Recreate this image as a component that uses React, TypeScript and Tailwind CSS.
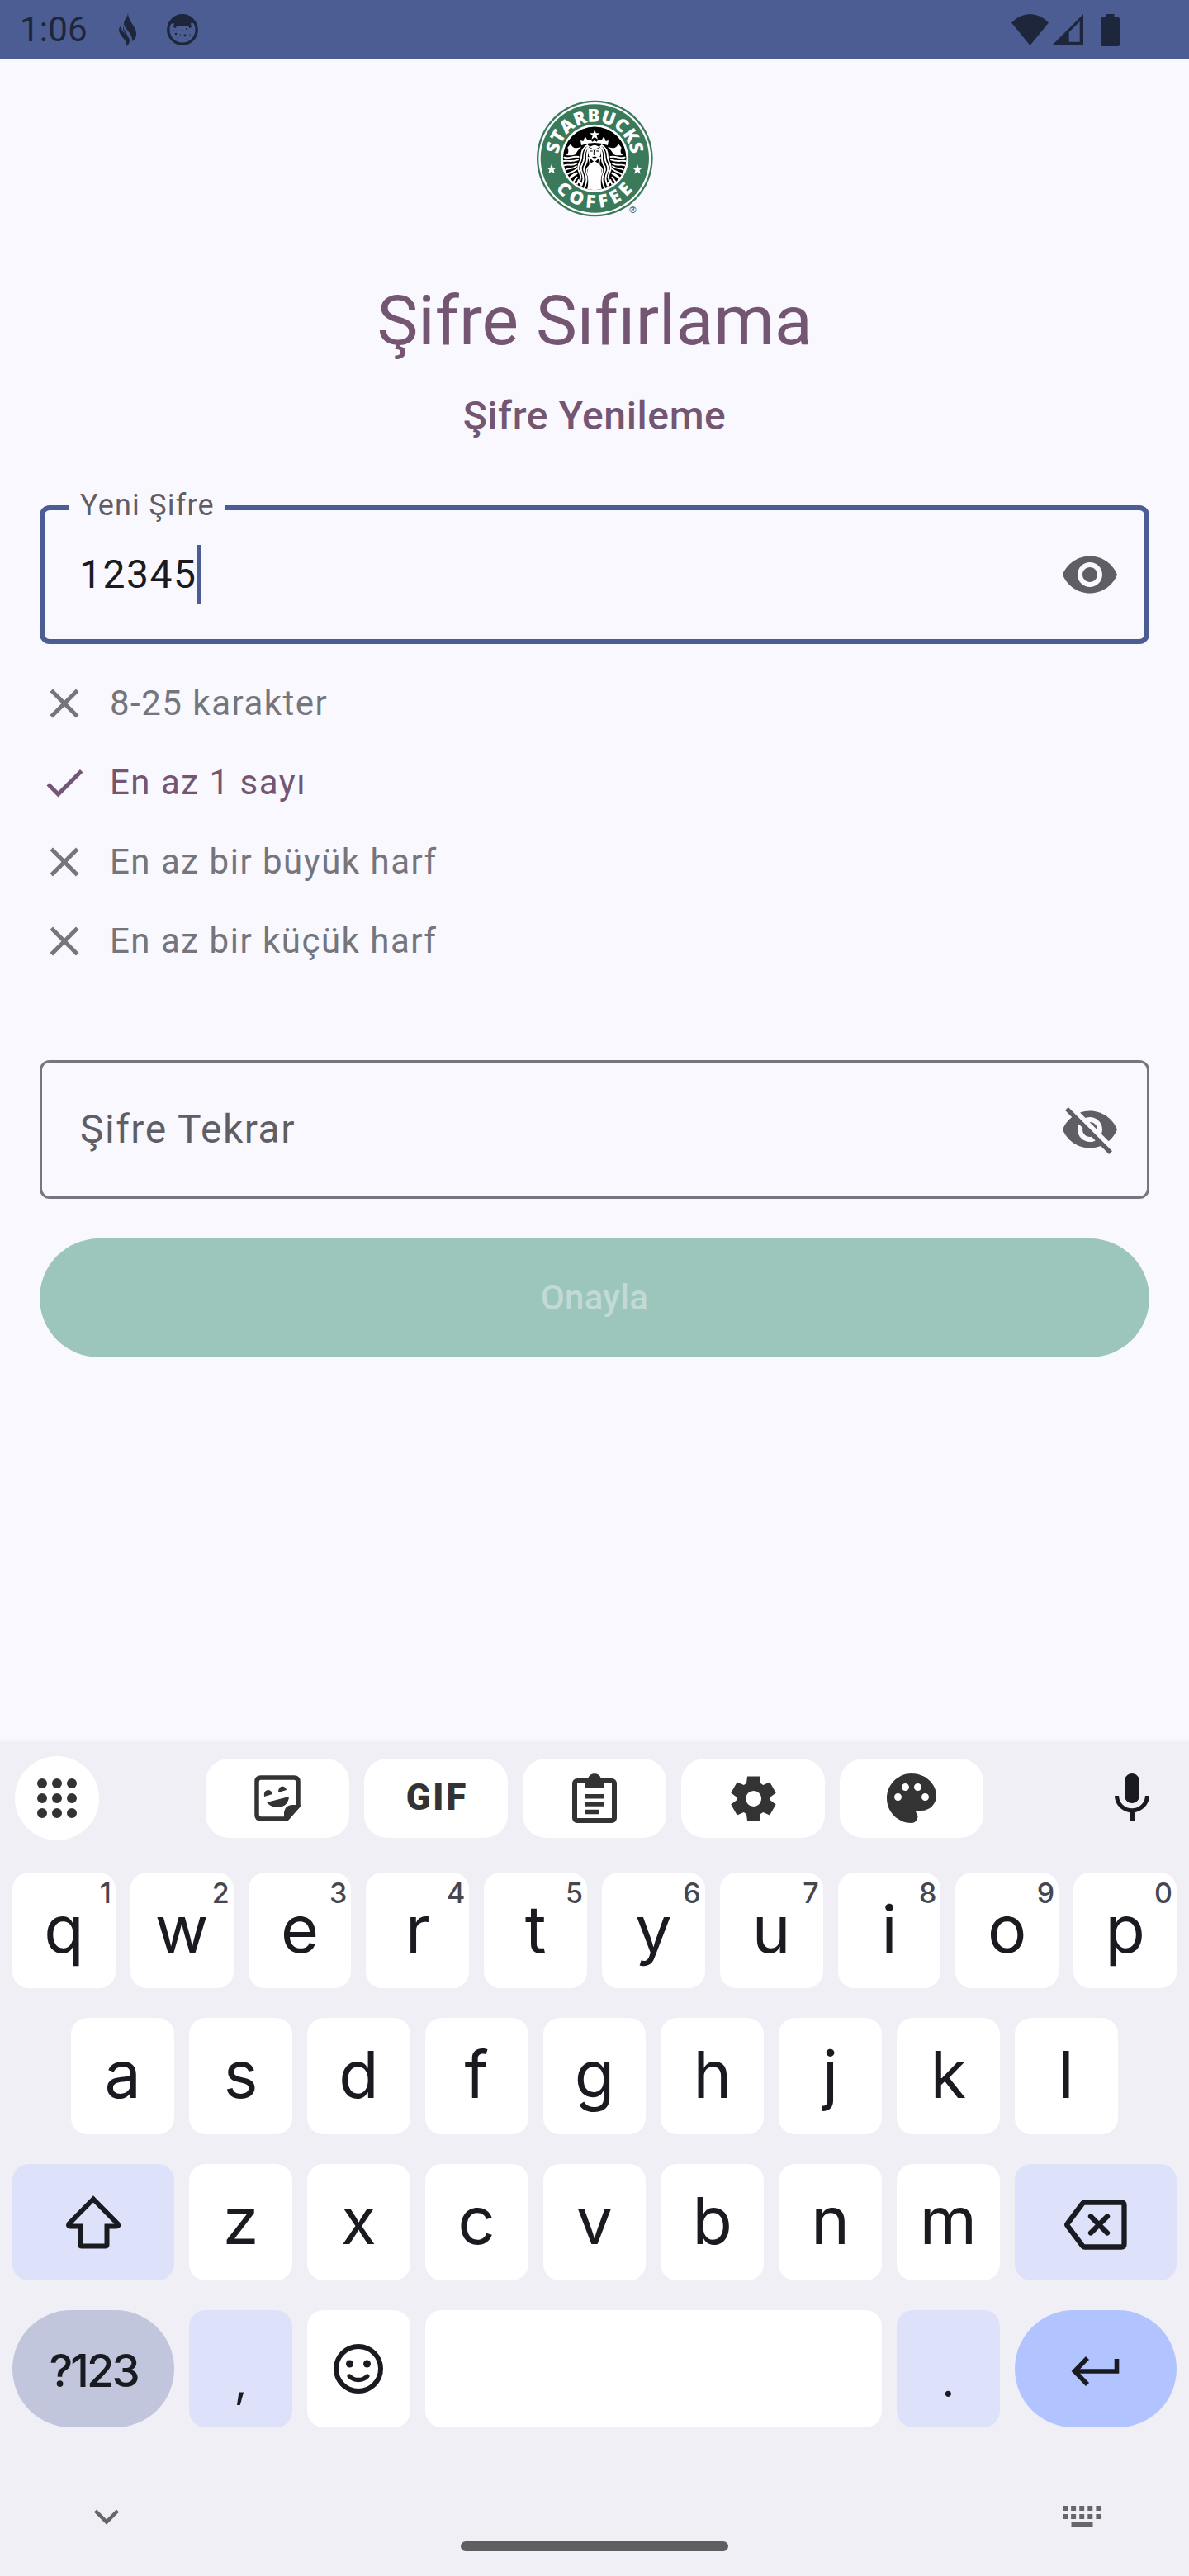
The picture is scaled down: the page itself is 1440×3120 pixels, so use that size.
import React from "react";
import { MdVisibility, MdVisibilityOff, MdClose, MdCheck, MdMic, MdPalette } from "react-icons/md";

const STAR = "M0 -19L4.8 -6H18L7.5 2.5L11.2 16L0 8L-11.2 16L-7.5 2.5L-18 -6H-4.8Z";

function SirenHalf() {
  return (
    <g>
      <path d="M165 262C178 256 176 244 172 234L184 220C186 228 190 232 198 236C206 236 214 234 222 232C214 240 206 248 202 258C190 266 176 262 165 262Z" fill="#fff" />
      <g fill="none" stroke="#fff" strokeWidth="5.5" strokeLinecap="round">
        <path d="M160 270C176 276 190 264 212 268" />
        <path d="M158 283C174 280 184 288 210 278" />
        <path d="M160 299C176 292 184 304 206 291" />
        <path d="M164 316C178 306 188 316 204 302" />
        <path d="M171 332C180 322 190 326 206 312" />
        <path d="M180 345C188 336 194 334 204 328" strokeWidth="9" />
        <path d="M194 358L206 342M206 368L212 352M218 378L220 362" />
      </g>
      <g fill="none" stroke="#fff" strokeWidth="6">
        <path d="M246 225C226 234 222 254 222 270C220 290 206 296 212 316C218 334 226 338 212 364" />
        <path d="M250 228C234 240 233 258 232 274C230 294 216 300 222 318C230 340 234 346 222 374" />
        <path d="M250 236C242 248 242 264 243 276C244 296 226 302 233 320C242 342 246 348 233 382" />
        <path d="M249 268C250 282 258 288 252 300C240 312 238 318 246 334C252 348 252 360 246 386" strokeWidth="5" />
      </g>
    </g>
  );
}

function Logo() {
  return (
    <svg className="h-[146px] w-[144px]" viewBox="54 58 432 438">
      <defs>
        <path id="arcTop" d="M138.5 290.3A133 133 0 1 1 402.5 290.3" />
        <path id="arcBottom" d="M127.4 384.4A181 181 0 0 0 411.6 386.4" />
        <clipPath id="disc"><circle cx="270.5" cy="273.5" r="115" /></clipPath>
      </defs>
      <circle cx="271" cy="274" r="211" fill="#3a7a5b" />
      <circle cx="271" cy="274" r="204" fill="#fff" />
      <circle cx="271" cy="274" r="197" fill="#3a7a5b" />
      <circle cx="270.5" cy="273.5" r="123" fill="#fff" />
      <circle cx="270.5" cy="273.5" r="115" fill="#000" />
      <g clipPath="url(#disc)">
        <SirenHalf />
        <g transform="translate(540 0) scale(-1 1)"><SirenHalf /></g>
        <path d="M270 283C286 290 288 300 292 308C300 322 288 340 294 392H246C252 340 240 322 248 308C252 300 254 290 270 283Z" fill="#fff" />
        <path d="M222 226L219 208L229 211L236 194L245 208L256 205L262 213L270 208L278 213L284 205L295 208L304 194L311 211L321 208L318 226Q270 208 222 226Z" fill="#fff" />
        <path d="M247 238Q257 226 270 225Q283 226 293 238V256Q290 274 270 286Q250 274 247 256Z" fill="#fff" />
        <g fill="none" stroke="#000" strokeWidth="3">
          <path d="M249 240Q258 233 265 241M275 241Q282 233 291 240M252 247H263M277 247H288M269 243L267 260H273" />
          <path d="M262 269Q270 265 278 269Q270 276 262 269Z" fill="#000" strokeWidth="1" />
        </g>
      </g>
      <path d={STAR} transform="translate(270.5 188)" fill="#fff" />
      <path d={STAR} transform="translate(114 313)" fill="#fff" />
      <path d={STAR} transform="translate(426 314)" fill="#fff" />
      <g fill="#fff" className="font-['Open_Sans'] font-extrabold" fontSize="66">
        <text><textPath href="#arcTop" startOffset="32" textLength="387" lengthAdjust="spacingAndGlyphs">STARBUCKS</textPath></text>
        <text><textPath href="#arcBottom" startOffset="2" textLength="322" lengthAdjust="spacing">COFFEE</textPath></text>
      </g>
      <text x="397" y="473" fontSize="34" fill="#222" className="font-['Liberation_Sans']">®</text>
    </svg>
  );
}

function StatusBar() {
  return (
    <header className="flex h-[72px] shrink-0 items-center bg-[#4b5d92] pl-6 pr-[84px] text-[#1e263b]">
      <span className="text-[42px] leading-[72px] tracking-[0.2px]">1:06</span>
      <svg className="ml-[37px] h-[42px] w-6" viewBox="0 0 24 42">
        <path d="M12 0C12 7 7 11 6 18C5 25 14 28 14 34C14 37 12 40 10 41C12 34 2 29 1 22C1 19 2 17 4 16C3 24 9 24 12 30C10 22 5 22 7 13C8 8 12 5 12 0Z" fill="currentColor" />
        <path d="M12 0C12 12 23 17 22 27C22 31 19 34 17 35C18 25 8 21 7 14C8 7 12 7 12 0Z" fill="currentColor" />
      </svg>
      <svg className="ml-[34px] h-10 w-10" viewBox="0 0 40 40">
        <circle cx="20" cy="20" r="17.2" fill="none" stroke="currentColor" strokeWidth="3.4" />
        <path d="M5 13C8 5 14 3 20 3S32 5 35 13L31 11L30 13L31 17L28 18L27 15Q20 17 13 15L12 18L9 17L10 12Z" fill="currentColor" />
        <g fill="currentColor">
          <circle cx="12" cy="25" r="1.3" /><circle cx="23" cy="27" r="1.4" /><circle cx="25" cy="19" r="1.1" />
          <circle cx="17" cy="26" r=".7" /><circle cx="20" cy="21" r=".7" /><circle cx="29" cy="26" r=".7" />
          <circle cx="14" cy="30" r=".6" /><circle cx="24" cy="32" r=".6" /><circle cx="32" cy="21" r=".6" /><circle cx="9" cy="20" r=".6" />
        </g>
      </svg>
      <div className="ml-auto flex items-center">
        <svg className="h-[38px] w-[45px]" viewBox="0 0 45 38"><path d="M0 10.5Q10 0 22.5 0T45 10.5L22.5 38Z" fill="currentColor" /></svg>
        <svg className="ml-1 h-[38px] w-[38px]" viewBox="0 0 38 38"><path fillRule="evenodd" d="M38 0V38H0ZM33.7 9L20.7 22V33.7H33.7Z" fill="currentColor" /></svg>
        <svg className="ml-[21px] h-[39px] w-[23px]" viewBox="0 0 23 39"><path d="M7 0H16.5V4H21Q23 4 23 6V37Q23 39 21 39H2Q0 39 0 37V6Q0 4 2 4H7Z" fill="currentColor" /></svg>
      </div>
    </header>
  );
}

const RULES = [
  { text: "8-25 karakter", ok: false },
  { text: "En az 1 sayı", ok: true },
  { text: "En az bir büyük harf", ok: false },
  { text: "En az bir küçük harf", ok: false },
];

function Form() {
  return (
    <main className="flex flex-1 flex-col px-12 pt-12">
      <div className="flex h-[146px] justify-center"><Logo /></div>
      <h1 className="mt-[69px] text-center text-[84px] leading-[108px] text-[#745572]">Şifre Sıfırlama</h1>
      <h2 className="mt-[25px] text-center text-[48px] font-medium leading-[72px] tracking-[0.6px] text-[#745572]">Şifre Yenileme</h2>

      <div className="relative mt-[72px] flex h-[168px] items-center rounded-[12px] border-[6px] border-[#4b5d92] pl-[42px] pr-[30px]">
        <span className="absolute -top-[30px] left-[30px] w-[189px] whitespace-nowrap bg-[#f9f8ff] pl-[13px] text-[36px] leading-[48px] tracking-[1.2px] text-[#5f5e66]">Yeni Şifre</span>
        <span className="text-[48px] leading-[72px] tracking-[1.5px] text-[#1a1b20]">12345</span>
        <span className="h-[72px] w-1.5 bg-[#4b5d92]" />
        <MdVisibility className="ml-auto size-[72px] text-[#5f5e66]" />
      </div>

      <ul className="mt-6">
        {RULES.map((r) => (
          <li key={r.text} className={r.ok ? "flex h-24 items-center gap-[25px] text-[#745572]" : "flex h-24 items-center gap-[25px] text-[#75757c]"}>
            {r.ok ? <MdCheck className="size-[60px]" /> : <MdClose className="size-[60px]" />}
            <span className="text-[42px] leading-[60px] tracking-[1.5px]">{r.text}</span>
          </li>
        ))}
      </ul>

      <div className="mt-24 flex h-[168px] items-center rounded-[12px] border-[3px] border-[#767580] pl-[46px] pr-[33px]">
        <span className="text-[48px] leading-[72px] tracking-[1.5px] text-[#5f5e66]">Şifre Tekrar</span>
        <MdVisibilityOff className="ml-auto size-[72px] text-[#5f5e66]" />
      </div>

      <button className="mt-12 h-36 rounded-full bg-[#9cc5bb] text-[42px] font-medium leading-[60px] tracking-[0.3px] text-[#c1dad5]">Onayla</button>
    </main>
  );
}

function ToolButton({ children }: { children: React.ReactNode }) {
  return <div className="flex h-24 w-[174px] items-center justify-center rounded-[28px] bg-white text-[#333333]">{children}</div>;
}

function Toolbar() {
  return (
    <div className="mx-[18px] mt-[17px] flex h-[102px] items-center">
      <div className="flex size-[102px] items-center justify-center rounded-full bg-white">
        <div className="grid grid-cols-3 gap-1.5">
          {Array.from({ length: 9 }, (_, i) => <span key={i} className="size-3 rounded-full bg-[#333333]" />)}
        </div>
      </div>
      <div className="ml-[129px] flex gap-[18px]">
        <ToolButton>
          <svg className="size-[72px]" viewBox="0 0 72 72">
            <path d="M16 11H56Q61 11 61 16V45L47 61H16Q11 61 11 56V16Q11 11 16 11Z" fill="none" stroke="currentColor" strokeWidth="5.5" />
            <path d="M44 63.7V53Q45 45 53 44H63.7V46L48 63.7Z" fill="currentColor" />
            <path d="M20 34Q19 27 24 26Q29 26 30 31ZM37 29Q37 22 42 21.5Q46 22 47 26ZM23 41L50 34Q49 46 37 47Q28 47 23 41Z" fill="currentColor" />
          </svg>
        </ToolButton>
        <ToolButton><span className="pl-[3px] text-[43.5px] font-black leading-[48px] tracking-[3px]">GIF</span></ToolButton>
        <ToolButton>
          <svg className="size-[72px]" viewBox="0 0 72 72">
            <rect x="12" y="15" width="48" height="48" rx="3" fill="none" stroke="currentColor" strokeWidth="6" />
            <path fillRule="evenodd" d="M24 12H28A8.5 8.5 0 0 1 44 12H48V24H24ZM39 15A3 3 0 1 0 33 15A3 3 0 1 0 39 15Z" fill="currentColor" />
            <path d="M24 33.7H48M24 43H48M24 52.5H41" stroke="currentColor" strokeWidth="5.5" />
          </svg>
        </ToolButton>
        <ToolButton>
          <svg className="size-[65px]" viewBox="0 -960 960 960" fill="currentColor">
            <path d="m370-80-16-128q-13-5-24.5-12T307-235l-119 50L78-375l103-78q-1-7-1-13.5v-27q0-6.5 1-13.5L78-585l110-190 119 50q11-8 23-15t24-12l16-128h220l16 128q13 5 24.5 12t22.5 15l119-50 110 190-103 78q1 7 1 13.5v27q0 6.5-2 13.5l103 78-110 190-118-50q-11 8-23 15t-24 12L590-80H370Zm112-260q58 0 99-41t41-99q0-58-41-99t-99-41q-59 0-99.5 41T342-480q0 58 40.5 99t99.5 41Z" />
          </svg>
        </ToolButton>
        <ToolButton><MdPalette className="size-[72px]" /></ToolButton>
      </div>
      <MdMic className="ml-auto mr-[15px] size-[72px] text-[#1a1b20]" />
    </div>
  );
}

function Key({ label, hint }: { label: string; hint?: string }) {
  return (
    <div className="relative h-full w-[124.8px] rounded-[20px] bg-white text-center font-['Inter'] text-[#1a1b20]">
      <span className="text-[79px] leading-[136px]">{label}</span>
      {hint && <span className="absolute right-[5px] top-[9px] text-[34px] font-medium leading-[32px] text-[#46464f]">{hint}</span>}
    </div>
  );
}

function Keyboard() {
  return (
    <footer className="flex h-[1013px] shrink-0 flex-col border-t-[3px] border-[#f4f3fa] bg-[#f0eff6]">
      <Toolbar />
      <div className="mx-[15px] mt-[39px] flex flex-col gap-9">
        <div className="flex h-[140px] gap-[18px]">
          {"qwertyuiop".split("").map((c, i) => <Key key={c} label={c} hint={String((i + 1) % 10)} />)}
        </div>
        <div className="flex h-[141px] justify-center gap-[18px]">
          {"asdfghjkl".split("").map((c) => <Key key={c} label={c} />)}
        </div>
        <div className="flex h-[141px] gap-[18px]">
          <div className="flex w-[196.2px] items-center justify-center rounded-[20px] bg-[#dde1f9]">
            <svg className="size-[72px]" viewBox="0 0 72 72" fill="none" stroke="#1a1b20" strokeWidth="6">
              <path d="M36 7.5L6.5 37.5Q5 40.5 8 40.5H20V62.5Q20 64.5 22 64.5H50.5Q52.5 64.5 52.5 62.5V40.5H64Q67.500 40.500 65.500 37.500Z" />
            </svg>
          </div>
          {"zxcvbnm".split("").map((c) => <Key key={c} label={c} />)}
          <div className="flex w-[196.2px] items-center justify-center rounded-[20px] bg-[#dde1f9]">
            <svg className="mt-1 h-[62px] w-[78px]" viewBox="0 0 78 62" fill="none" stroke="#1a1b20" strokeWidth="6.3">
              <path d="M26 4.5H70Q73.5 4.5 73.5 8V55Q73.5 58.500 70 58.500H26Q24 58.500 23 57L5 33Q3.500 31.500 5 30L23 6Q24 4.500 26 4.500Z" />
              <path d="M33 21.5L53 41.5M53 21.5L33 41.5" strokeLinecap="round" />
            </svg>
          </div>
        </div>
        <div className="flex h-[142px] gap-[18px] text-[#1a1b20]">
          <div className="flex w-[196.2px] items-center justify-center rounded-full bg-[#c1c6dd] pt-[5px] font-['Inter'] text-[54.5px] font-medium tracking-[-3px]">?123</div>
          <div className="w-[124.8px] rounded-[20px] bg-[#dde1f9] text-center font-['Inter'] text-[56px] leading-[170px]">,</div>
          <div className="flex w-[124.8px] items-center justify-center rounded-[20px] bg-white">
            <svg className="size-[72px]" viewBox="0 0 24 24" fill="none" stroke="currentColor" strokeWidth="2">
              <circle cx="12" cy="12" r="9" />
              <circle cx="8.5" cy="10" r="1.5" fill="currentColor" stroke="none" />
              <circle cx="15.5" cy="10" r="1.5" fill="currentColor" stroke="none" />
              <path d="M8.400 15Q9.800 16.500 12 16.500T15.600 15" strokeWidth="1.8" strokeLinecap="round" />
            </svg>
          </div>
          <div className="w-[553.2px] rounded-[20px] bg-white" />
          <div className="w-[124.8px] rounded-[20px] bg-[#dde1f9] text-center font-['Inter'] text-[56px] leading-[170px]">.</div>
          <div className="flex w-[196.2px] items-center justify-center rounded-full bg-[#b2c4ff]">
            <svg className="h-[42px] w-[60px]" viewBox="0 0 60 42" fill="none" stroke="currentColor" strokeWidth="5.6">
              <path d="M20 8L4.500 24L20 40" />
              <path d="M5 24H55.500V9" />
            </svg>
          </div>
        </div>
      </div>
      <div className="mt-[93px] flex h-[30px] items-center justify-between pl-[113px] pr-[105px] text-[#66666a]">
        <svg className="h-[20px] w-8" viewBox="0 0 32 20" fill="none" stroke="currentColor" strokeWidth="4.5"><path d="M2.500 3L16 16.500L29.500 3" /></svg>
        <svg className="h-[28px] w-[48px]" viewBox="0 0 48 28" fill="currentColor">
          {[0, 1, 2, 3, 4].map((i) => (
            <g key={i}><rect x={i * 10.1} y="1" width="6" height="6" /><rect x={i * 10.1} y="11" width="6" height="6" /></g>
          ))}
          <rect x="10.500" y="21" width="26" height="6" />
        </svg>
      </div>
      <div className="mx-auto mt-[15px] h-3 w-[324px] rounded-full bg-[#5f5f62]" />
    </footer>
  );
}

export default function App() {
  return (
    <div className="flex h-[3120px] w-full flex-col overflow-hidden bg-[#f9f8ff] font-['Roboto',sans-serif]">
      <StatusBar />
      <Form />
      <Keyboard />
    </div>
  );
}
